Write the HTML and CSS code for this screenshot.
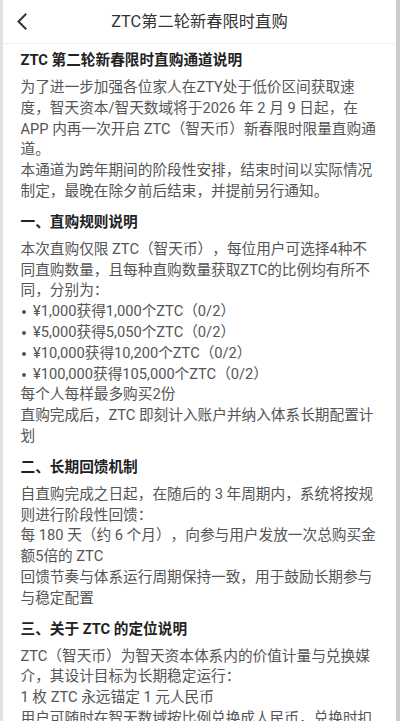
FILE: index.html
```html
<!DOCTYPE html>
<html lang="zh-CN">
<head>
<meta charset="utf-8">
<meta name="viewport" content="width=device-width, initial-scale=1">
<title>ZTC第二轮新春限时直购</title>
<link rel="stylesheet" href="styles.css">
</head>
<body>
<div class="page">
  <header class="topbar">
    <button class="back" aria-label="返回">
      <svg width="12" height="18" viewBox="0 0 12 18"><path d="M9.5 1.5 L2.5 8.5 L9.5 15.5" fill="none" stroke="#333" stroke-width="2" stroke-linecap="square"/></svg>
    </button>
    <h1 class="title">ZTC第二轮新春限时直购</h1>
    <span class="spacer"></span>
  </header>
  <main class="content">
    <section class="sec first">
      <h2 class="sec-title">ZTC 第二轮新春限时直购通道说明</h2>
      <p>为了进一步加强各位家人在ZTY处于低价区间获取速度，智天资本/智天数域将于2026 年 2 月 9 日起，在APP 内再一次开启 ZTC（智天币）新春限时限量直购通道。</p>
      <p>本通道为跨年期间的阶段性安排，结束时间以实际情况制定，最晚在除夕前后结束，并提前另行通知。</p>
    </section>
    <section class="sec">
      <h2 class="sec-title">一、直购规则说明</h2>
      <p>本次直购仅限 ZTC（智天币），每位用户可选择4种不同直购数量，且每种直购数量获取ZTC的比例均有所不同，分别为：</p>
      <ul class="list">
        <li>¥1,000获得1,000个ZTC（0/2）</li>
        <li>¥5,000获得5,050个ZTC（0/2）</li>
        <li>¥10,000获得10,200个ZTC（0/2）</li>
        <li>¥100,000获得105,000个ZTC（0/2）</li>
      </ul>
      <p>每个人每样最多购买2份</p>
      <p>直购完成后，ZTC 即刻计入账户并纳入体系长期配置计划</p>
    </section>
    <section class="sec">
      <h2 class="sec-title">二、长期回馈机制</h2>
      <p>自直购完成之日起，在随后的 3 年周期内，系统将按规则进行阶段性回馈：</p>
      <p>每 180 天（约 6 个月），向参与用户发放一次总购买金额5倍的 ZTC</p>
      <p>回馈节奏与体系运行周期保持一致，用于鼓励长期参与与稳定配置</p>
    </section>
    <section class="sec">
      <h2 class="sec-title">三、关于 ZTC 的定位说明</h2>
      <p>ZTC（智天币）为智天资本体系内的价值计量与兑换媒介，其设计目标为长期稳定运行：</p>
      <p>1 枚 ZTC 永远锚定 1 元人民币</p>
      <p>用户可随时在智天数域按比例兑换成人民币，兑换时扣除相应手续费，具体以平台公示为准。</p>
    </section>
  </main>
</div>
</body>
</html>
```
FILE: styles.css
```css
html, body {
  margin: 0;
  padding: 0;
  background: #ffffff;
}
body {
  font-family: Roboto, "Noto Sans CJK SC", sans-serif;
  color: #555555;
  text-spacing-trim: space-all;
}
.page {
  min-height: 100vh;
  border-left: 3px solid #e2e2e2;
  border-right: 4px solid #cccccc;
  background: #ffffff;
}
.topbar {
  height: 43px;
  display: grid;
  grid-template-columns: 40px 1fr 40px;
  align-items: center;
  border-bottom: 1px solid #efefef;
}
.back {
  border: 0;
  background: none;
  padding: 0 0 0 13px;
  margin: 0;
  height: 43px;
  display: flex;
  align-items: center;
  cursor: pointer;
}
.back svg {
  display: block;
  margin-top: 1px;
}
.title {
  margin: 0;
  text-align: center;
  font-size: 16.3px;
  font-weight: 400;
  color: #333333;
  line-height: 43px;
}
.content {
  padding: 6px 19.8px 0 17.5px;
}
.sec {
  margin-top: 10px;
}
.sec.first {
  margin-top: 0;
}
.sec-title {
  margin: 0 0 6px;
  font-size: 14.67px;
  line-height: 21px;
  font-weight: 700;
  color: #222222;
}
.sec p {
  margin: 0;
  font-size: 14.67px;
  line-height: 20.8px;
}
.list {
  list-style: none;
  margin: 0;
  padding: 0;
}
.list li {
  position: relative;
  padding-left: 12.5px;
  font-size: 14.67px;
  line-height: 20.8px;
}
.list li::before {
  content: "";
  position: absolute;
  left: 1px;
  top: 9px;
  width: 4px;
  height: 4px;
  border-radius: 50%;
  background: #555555;
}
```
